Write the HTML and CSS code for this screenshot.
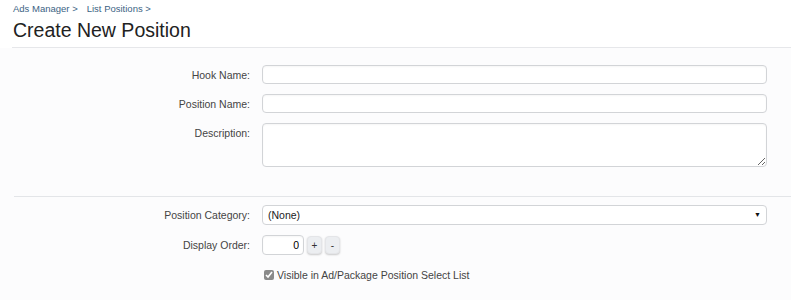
FILE: index.html
```html
<!DOCTYPE html>
<html lang="en">
<head>
  <meta charset="UTF-8">
  <title>Create New Position</title>
  <link rel="stylesheet" href="styles.css">
</head>
<body>

  <div class="crumbs">
    <span class="crumb"><a href="#">Ads Manager</a> &gt;</span>
    <span class="crumb"><a href="#">List Positions</a> &gt;</span>
  </div>
  <h1>Create New Position</h1>

  <form class="xform">
    <div class="row">
      <label for="hook">Hook Name:</label>
      <input type="text" id="hook" class="text">
    </div>
    <div class="row">
      <label for="pname">Position Name:</label>
      <input type="text" id="pname" class="text">
    </div>
    <div class="row">
      <label for="desc">Description:</label>
      <textarea id="desc" class="text"></textarea>
    </div>

    <hr>

    <div class="row">
      <label for="cat">Position Category:</label>
      <div class="select">(None)<span class="arrow">&#9660;</span></div>
    </div>
    <div class="row">
      <label for="order">Display Order:</label>
      <div class="spin">
        <input type="text" id="order" class="text num" value="0">
        <button type="button">+</button>
        <button type="button">-</button>
      </div>
    </div>
    <div class="row">
      <span></span>
      <label class="check"><input type="checkbox" checked> Visible in Ad/Package Position Select List</label>
    </div>
  </form>

</body>
</html>
```

FILE: styles.css
```css
body {
  margin: 0;
  font-family: "Liberation Sans", Arial, sans-serif;
  background: #fff;
  color: #333;
}
.crumbs {
  padding: 3px 13px 0;
  font-size: 9.5px;
  color: #3c6384;
  height: 15px;
  display: flex;
  gap: 9px;
}
.crumbs a {
  color: #3c6384;
  text-decoration: none;
}
h1 {
  font-size: 19.5px;
  font-weight: normal;
  color: #222;
  margin: 0 0 0 12px;
  padding: 1px 0 6px 1px;
  border-bottom: 1px solid #e6e7ea;
  line-height: 22px;
}
.xform {
  background: #fcfcfd;
  padding: 17px 0 20px;
  margin: 0;
  font-size: 10.5px;
}
.row {
  display: grid;
  grid-template-columns: 250px 505px;
  column-gap: 12px;
  margin-bottom: 10px;
}
.row > label {
  text-align: right;
  color: #444;
  padding-top: 4px;
}
.text {
  box-sizing: border-box;
  height: 19px;
  border: 1px solid #d2d4d7;
  border-radius: 4px;
  background: #fff;
  box-shadow: inset 0 1px 2px rgba(0,0,0,0.04);
  font: inherit;
  padding: 2px 4px;
  margin: 0;
}
textarea.text {
  height: 44px;
  resize: vertical;
}
hr {
  border: none;
  border-top: 1px solid #e3e5e8;
  margin: 29px 0 8px 14px;
}
.select {
  box-sizing: border-box;
  height: 20px;
  border: 1px solid #d2d4d7;
  border-radius: 4px;
  background: #fff;
  padding: 3px 5px;
  display: flex;
  justify-content: space-between;
  color: #222;
}
.arrow {
  font-size: 7px;
  padding-top: 2px;
  color: #111;
}
.spin {
  display: flex;
  gap: 3px;
  align-items: center;
}
.num {
  width: 42px;
  text-align: right;
  height: 20px;
}
.spin button {
  width: 15px;
  height: 18px;
  padding: 0;
  border: 1px solid #e4e5e8;
  border-radius: 4px;
  background: #eceef1;
  box-shadow: 0 1px 2px rgba(0,0,0,0.2);
  font: inherit;
  font-size: 10px;
  color: #333;
}
.check {
  color: #444;
  display: flex;
  align-items: center;
  gap: 3px;
  padding-top: 2px;
}
.check input {
  margin: 0 0 0 2px;
  width: 10px;
  height: 10px;
  accent-color: #8a8a8a;
}
```
